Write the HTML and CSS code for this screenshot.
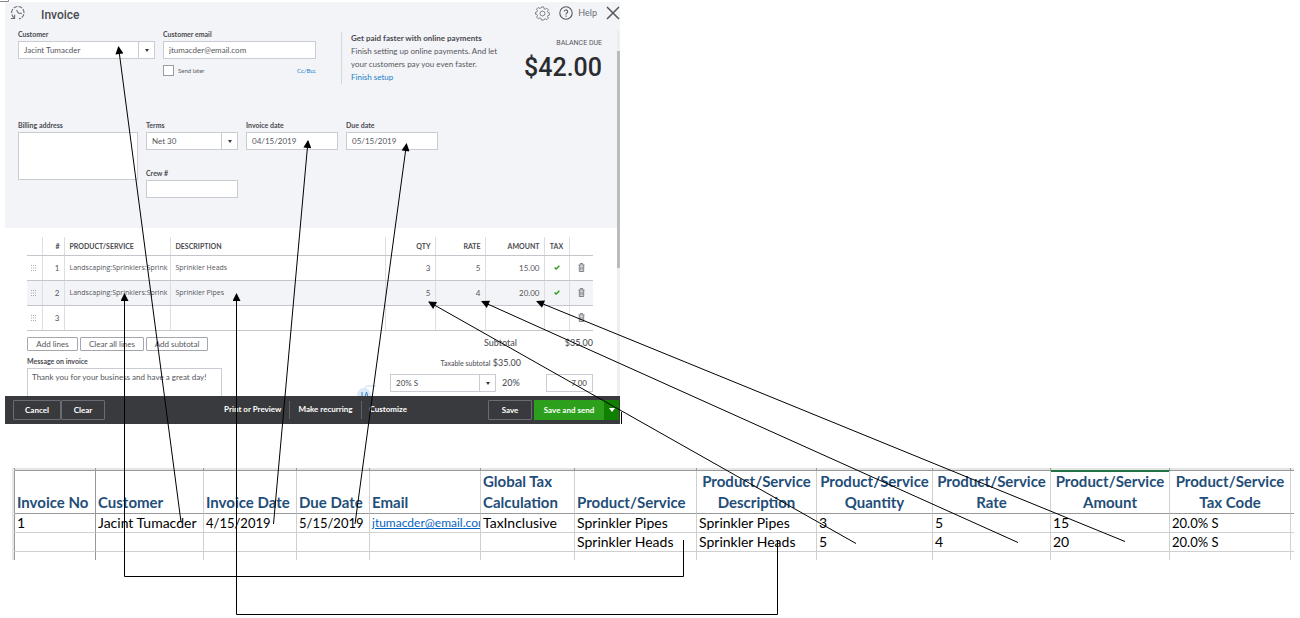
FILE: index.html
```html
<!DOCTYPE html>
<html lang="en">
<head>
<meta charset="utf-8">
<title>Invoice field mapping</title>
<link rel="stylesheet" href="styles.css">
</head>
<body>
<main class="mapping">
  <div class="stage">
    <section class="invoice">
      <header class="topbar">
        <svg class="icon-history" viewBox="0 0 16 16" width="16" height="16" fill="none" stroke="#6b6c72" stroke-width="1.1"><path d="M4 12.600A6.200 6.200 0 1 1 9 13.800" stroke-dasharray="4 1.200"/><path d="M.8 13.500h3.800V9.800M6.500 5l2 3.300H12"/></svg>
        <h1 class="title">Invoice</h1>
        <button class="tool" aria-label="Settings"><svg viewBox="0 0 16 16" width="15" height="15" fill="none" stroke="#6b6c72" stroke-width=".9"><path d="M6.800 1h2.400l.5 1.900 1.200.5 1.700-1 1.700 1.700-1 1.700.5 1.200 1.900.5v2l-1.900.5-.5 1.200 1 1.700-1.700 1.700-1.700-1-1.200.5L9.200 15H6.800l-.5-1.900-1.200-.5-1.700 1-1.700-1.700 1-1.700L2.100 9 .5 8.700v-2l1.600-.5.5-1.200-1-1.700 1.700-1.700 1.700 1 1.300-.5z"/><circle cx="8" cy="8" r="2.600"/></svg></button>
        <button class="tool help"><svg viewBox="0 0 14 14" width="14" height="14" fill="none" stroke="#55565b" stroke-width="1.100"><circle cx="7" cy="7" r="6.200"/><path d="M5.300 5.600a1.700 1.700 0 1 1 2.500 1.500c-.6.3-.8.600-.8 1.300M7 9.500v1.200"/></svg>Help</button>
        <button class="tool" aria-label="Close"><svg viewBox="0 0 14 14" width="14" height="14" stroke="#55565b" stroke-width="1.500"><path d="M1 1l12 12M13 1L1 13"/></svg></button>
      </header>

      <div class="scroll-area">
        <div class="content">
          <div class="details">
            <div class="row contact">
              <div class="field customer">
                <label for="customer">Customer</label>
                <span class="combo"><select id="customer"><option>Jacint Tumacder</option></select></span>
              </div>
              <div class="field email">
                <label for="email">Customer email</label>
                <input id="email" type="text" value="jtumacder@email.com">
                <div class="email-options">
                  <input id="later" type="checkbox"><label for="later">Send later</label>
                  <a href="#">Cc/Bcc</a>
                </div>
              </div>
              <div class="promo">
                <strong>Get paid faster with online payments</strong>
                <p>Finish setting up online payments. And let your customers pay you even faster.</p>
                <a href="#">Finish setup</a>
              </div>
              <div class="balance">
                <span class="balance-label">BALANCE DUE</span>
                <span class="balance-amount">$42.00</span>
              </div>
            </div>
            <div class="row terms-row">
              <div class="field billing">
                <label for="billing">Billing address</label>
                <textarea id="billing"></textarea>
              </div>
              <div class="stack">
                <div class="field">
                  <label for="terms">Terms</label>
                  <span class="combo"><select id="terms"><option>Net 30</option></select></span>
                </div>
                <div class="field">
                  <label for="crew">Crew #</label>
                  <input id="crew" type="text">
                </div>
              </div>
              <div class="field date">
                <label for="invdate">Invoice date</label>
                <input id="invdate" type="text" value="04/15/2019">
              </div>
              <div class="field date">
                <label for="duedate">Due date</label>
                <input id="duedate" type="text" value="05/15/2019">
              </div>
            </div>
          </div>

          <div class="lines">
            <table class="items">
              <colgroup><col class="w-grip"><col class="w-num"><col class="w-product"><col><col class="w-qty"><col class="w-qty"><col class="w-amount"><col class="w-tax"><col class="w-del"></colgroup>
              <thead>
                <tr><th></th><th class="num">#</th><th class="name">PRODUCT/SERVICE</th><th class="name">DESCRIPTION</th><th class="num">QTY</th><th class="num">RATE</th><th class="num">AMOUNT</th><th class="mid">TAX</th><th></th></tr>
              </thead>
              <tbody>
                <tr>
                  <td class="mid"><svg class="grip" viewBox="0 0 6 6"><path d="M0 .5h6M0 3h6M0 5.500h6"/></svg></td><td class="num">1</td><td class="name">Landscaping:Sprinklers:Sprink</td><td class="name">Sprinkler Heads</td><td class="num">3</td><td class="num">5</td><td class="num">15.00</td>
                  <td class="mid"><svg class="tick" viewBox="0 0 6 5"><path d="M.6 2.600l1.500 1.500L5.400.8"/></svg></td>
                  <td class="mid"><svg class="bin" viewBox="0 0 7 9"><path d="M.5 2h6M2.300 1.800V.5h2.400v1.300M1.300 2v6.500h4.400V2M2.800 3.500v4M4.200 3.500v4"/></svg></td>
                </tr>
                <tr class="active">
                  <td class="mid"><svg class="grip" viewBox="0 0 6 6"><path d="M0 .5h6M0 3h6M0 5.500h6"/></svg></td><td class="num">2</td><td class="name">Landscaping:Sprinklers:Sprink</td><td class="name">Sprinkler Pipes</td><td class="num">5</td><td class="num">4</td><td class="num">20.00</td>
                  <td class="mid"><svg class="tick" viewBox="0 0 6 5"><path d="M.6 2.600l1.500 1.500L5.400.8"/></svg></td>
                  <td class="mid"><svg class="bin" viewBox="0 0 7 9"><path d="M.5 2h6M2.300 1.800V.5h2.400v1.300M1.300 2v6.500h4.400V2M2.800 3.500v4M4.200 3.500v4"/></svg></td>
                </tr>
                <tr>
                  <td class="mid"><svg class="grip" viewBox="0 0 6 6"><path d="M0 .5h6M0 3h6M0 5.500h6"/></svg></td><td class="num">3</td><td></td><td></td><td></td><td></td><td></td><td></td>
                  <td class="mid"><svg class="bin" viewBox="0 0 7 9"><path d="M.5 2h6M2.300 1.800V.5h2.400v1.300M1.300 2v6.500h4.400V2M2.800 3.500v4M4.200 3.500v4"/></svg></td>
                </tr>
              </tbody>
            </table>

            <div class="below">
              <div class="below-left">
                <div class="line-actions">
                  <button class="add">Add lines</button><button class="clear-all">Clear all lines</button><button class="subtotal-btn">Add subtotal</button>
                </div>
                <div class="field message">
                  <label for="message">Message on invoice</label>
                  <textarea id="message">Thank you for your business and have a great day!</textarea>
                </div>
              </div>
              <svg class="assist" viewBox="0 0 20 12" width="20" height="12"><circle cx="7" cy="10" r="7" fill="#d9e9f7"/><path d="M8 4c0-3 2-3 5-3h6" fill="none" stroke="#c3d9ee"/><path d="M5 7v5M8 12l1.500-5L11 12" fill="none" stroke="#3f7fc0"/></svg>
              <div class="totals">
                <div class="subtotal"><span>Subtotal</span><span>$35.00</span></div>
                <div class="taxable"><small>Taxable subtotal</small> $35.00</div>
                <div class="tax-row">
                  <span class="combo tax-code"><select aria-label="Tax code"><option>20% S</option></select></span>
                  <span class="rate">20%</span>
                  <input class="tax-amount" type="text" value="7.00" aria-label="Tax amount">
                </div>
              </div>
            </div>
          </div>
        </div>
        <div class="scrollbar"><div class="thumb"></div></div>
      </div>

      <footer class="actions">
        <button class="dark cancel">Cancel</button><button class="dark clear">Clear</button>
        <nav class="links"><a href="#">Print or Preview</a><a href="#">Make recurring</a><a href="#">Customize</a></nav>
        <button class="dark save">Save</button>
        <button class="send">Save and send</button><button class="send-more" aria-label="More save options"><svg viewBox="0 0 6 4" width="6" height="4"><path d="M0 0h6L3 4z" fill="#fff"/></svg></button>
      </footer>
    </section>
  </div>

  <div class="sheet-wrap">
    <table class="sheet">
      <colgroup><col class="c-edge"><col class="c-no"><col class="c-cust"><col class="c-date"><col class="c-due"><col class="c-email"><col class="c-calc"><col class="c-prod"><col class="c-desc"><col class="c-qty"><col class="c-rate"><col class="c-amt"><col class="c-code"><col class="c-end"></colgroup>
      <thead>
        <tr class="ruler"><td></td><td></td><td></td><td></td><td></td><td></td><td></td><td></td><td></td><td></td><td></td><td></td><td></td><td></td></tr>
        <tr><th></th><th>Invoice No</th><th>Customer</th><th>Invoice Date</th><th>Due Date</th><th>Email</th><th>Global Tax Calculation</th><th>Product/Service</th><th class="center">Product/Service Description</th><th class="center">Product/Service Quantity</th><th class="center">Product/Service Rate</th><th class="center selected">Product/Service Amount</th><th class="center">Product/Service Tax Code</th><th></th></tr>
      </thead>
      <tbody>
        <tr><td></td><td>1</td><td>Jacint Tumacder</td><td class="day">4/15/2019</td><td class="day">5/15/2019</td><td class="mail"><a href="#">jtumacder@email.com</a></td><td>TaxInclusive</td><td>Sprinkler Pipes</td><td>Sprinkler Pipes</td><td>3</td><td>5</td><td>15</td><td class="day">20.0% S</td><td></td></tr>
        <tr><td></td><td></td><td></td><td></td><td></td><td></td><td></td><td>Sprinkler Heads</td><td>Sprinkler Heads</td><td>5</td><td>4</td><td>20</td><td class="day">20.0% S</td><td></td></tr>
        <tr class="stub"><td></td><td></td><td></td><td></td><td></td><td></td><td></td><td></td><td></td><td></td><td></td><td></td><td></td><td></td></tr>
      </tbody>
    </table>
  </div>

  <svg class="arrows" viewBox="0 0 1300 618" preserveAspectRatio="none" fill="none" stroke="#000">
    <defs><marker id="head" viewBox="0 0 9 8" refX="1" refY="4" markerWidth="9" markerHeight="8" markerUnits="userSpaceOnUse" orient="auto"><path d="M0 4L8 0v8z" fill="#000" stroke="none"/></marker></defs>
    <path d="M0 1.500h8.500V0" stroke="#888"/>
    <path d="M621.500 412v12"/>
    <g marker-start="url(#head)">
      <path d="M118.500 47L181 522"/>
      <path d="M308 141L273.500 524"/>
      <path d="M406.500 144L355 524"/>
      <path d="M124.500 294V576.500H683.500V540"/>
      <path d="M236.500 294V614.500H777.500V540"/>
      <path d="M429 302L856 543.500"/>
      <path d="M482 301.500L1018 542.500"/>
      <path d="M537 301.500L1125 541.500"/>
    </g>
  </svg>
</main>
</body>
</html>
```
FILE: styles.css
```css
* { box-sizing: border-box; }
body { margin: 0; background: #fff; font-family: Lato, "Liberation Sans", sans-serif; }
button, input, select, textarea { font: inherit; color: inherit; margin: 0; border-radius: 0; }
button { cursor: pointer; white-space: nowrap; }
p, h1 { margin: 0; }
a { color: #1381c9; text-decoration: none; }

.mapping { position: relative; min-height: 618px; }
.stage { display: grid; grid-template-columns: 615fr 680fr; padding: 2px 0 0 5px; }
.arrows { position: absolute; top: 0; left: 0; width: 100%; height: 618px; pointer-events: none; }

/* Invoice window */
.invoice { min-width: 0; font-size: 8px; line-height: 10px; color: #55565b; }
.topbar { display: flex; align-items: center; gap: 9px; height: 28px; padding: 0 0 6px 5px; background: #f3f4f8; }
.title { flex: 1; padding: 3px 0 0 6px; font: 500 12px/16px Roboto, sans-serif; color: #4a4b50; }
.tool { display: flex; align-items: center; gap: 5px; padding: 0; border: 0; background: none; color: #6b6c72; font-size: 9px; }
.scroll-area { display: flex; height: 366px; overflow: hidden; }
.content { flex: 1; min-width: 0; }
.scrollbar { width: 3px; padding-top: 21px; background: #eee; }
.thumb { height: 217px; background: #bbb; }

.details { height: 198px; padding: 0 15px 0 13px; background: #f3f4f8; }
.row { display: flex; align-items: flex-start; }
.contact { height: 91px; gap: 8px; }
.terms-row { gap: 8px; }
.field { display: flex; flex-direction: column; }
.field > label { height: 11px; line-height: 8px; font-size: 7px; font-weight: 700; color: #4a4b50; white-space: nowrap; }
input[type="text"], select, textarea { width: 100%; height: 18px; padding: 0 5px; border: 1px solid #c9ccd2; background: #fff; outline: 0; font-size: 8px; color: #55565b; }
textarea { display: block; resize: none; overflow: hidden; }
.combo { position: relative; display: block; }
.combo select { appearance: none; }
.combo::before { content: ""; position: absolute; top: 1px; bottom: 1px; right: 16px; width: 1px; background: #c9ccd2; }
.combo::after { content: ""; position: absolute; top: 8px; right: 6px; border: 2px solid transparent; border-top: 3px solid #393a3d; border-bottom: 0; }
.customer { width: 137px; }
.email { width: 153px; }
.email-options { display: flex; align-items: center; gap: 4px; margin-top: 6px; font-size: 6px; }
.email-options input { appearance: none; width: 11px; height: 11px; border: 1px solid #9a9ca3; background: #fff; }
.email-options a { margin-left: auto; }
.promo { width: 170px; margin: 2px 0 0 17px; padding-left: 9px; border-left: 1px solid #d4d7dc; line-height: 13px; }
.promo strong { color: #4a4b50; white-space: nowrap; }
.balance { display: flex; flex-direction: column; align-items: flex-end; flex: 1; padding-top: 8px; font-family: Roboto, sans-serif; }
.balance-label { font-size: 7px; white-space: nowrap; }
.balance-amount { font-size: 25px; font-weight: 500; line-height: 40px; color: #2b2c2f; }
.billing { width: 120px; }
.billing textarea { height: 48px; }
.stack { display: flex; flex-direction: column; gap: 19px; width: 92px; }
.date { width: 92px; }

.lines { padding: 9px 24px 0 22px; }
.items { width: 100%; table-layout: fixed; border-collapse: collapse; }
.items th, .items td { height: 25px; padding: 0 4px; border-left: 1px solid #dcdee3; border-bottom: 1px solid #c4c6cb; text-align: left; white-space: nowrap; overflow: hidden; }
.items th { height: 18px; font-size: 7px; color: #4a4b50; }
.items th:first-child, .items td:first-child { border-left: 0; }
.items .name { padding: 0 0 0 5px; }
.items td.name { font-family: "Open Sans", sans-serif; font-size: 7px; }
.items .num { text-align: right; }
.items .mid { text-align: center; }
.items .active { background: #f3f4f8; }
.w-grip { width: 15px; }
.w-num { width: 22px; }
.w-product { width: 106px; }
.w-qty { width: 50px; }
.w-amount { width: 59px; }
.w-tax { width: 25px; }
.w-del { width: 24px; }
.items svg { display: block; margin: 0 auto; fill: none; }
.grip { width: 6px; height: 6px; stroke: #aaacb2; stroke-width: 1; stroke-dasharray: 1 1; }
.tick { width: 6px; height: 5px; stroke: #2ca01c; stroke-width: 1.4; }
.bin { width: 7px; height: 9px; stroke: #7d8086; stroke-width: 1; }

.below { display: flex; align-items: flex-start; padding-top: 6px; }
.below-left { flex: 1; }
.line-actions { display: flex; gap: 2px; }
.line-actions button { height: 14px; padding: 0; border: 1px solid #a5a7ad; border-radius: 1px; background: #fff; font-size: 8px; line-height: 10px; }
.line-actions .add { width: 51px; }
.line-actions .clear-all { width: 64px; }
.line-actions .subtotal-btn { width: 62px; }
.message { width: 195px; margin-top: 6px; }
.message textarea { height: 48px; padding: 3px 4px; }
.assist { align-self: flex-start; margin: 48px 13px 0 0; }
.totals { width: 203px; font-size: 9px; line-height: 12px; font-weight: 500; }
.subtotal { display: flex; justify-content: space-between; padding-left: 94px; }
.taxable { margin-top: 8px; padding-right: 72px; text-align: right; }
.taxable small { font-size: 7px; }
.tax-row { display: flex; align-items: center; gap: 6px; margin-top: 5px; }
.tax-code { width: 106px; }
.rate { flex: 1; }
.tax-row .tax-amount { width: 47px; text-align: right; }

.actions { display: flex; align-items: center; height: 28px; padding: 0 1px 0 8px; background: #393a3d; color: #fff; font-size: 8px; }
.actions button { height: 20px; padding: 0; border: 0; font-weight: 700; }
.actions .dark { border: 1px solid #6b6c72; border-radius: 1px; background: none; }
.cancel { width: 48px; }
.clear { width: 44px; }
.save { width: 44px; margin-right: 2px; }
.send { width: 70px; background: #2ca01c; }
.actions .send-more { display: flex; align-items: center; justify-content: center; width: 15px; background: #108000; }
.links { display: flex; flex: 1; justify-content: center; padding-left: 38px; }
.links a { padding: 2px 8px 4px; color: #fff; font-weight: 700; line-height: 12px; white-space: nowrap; }
.links a + a { border-left: 1px solid #606167; }

/* Spreadsheet */
.sheet-wrap { padding: 44px 6px 0 12px; }
.sheet { width: 100%; table-layout: fixed; border-collapse: separate; border-spacing: 0; font-size: 14px; line-height: 18px; color: #000; }
.sheet th, .sheet td { height: 19px; padding: 0 0 0 2px; border-right: 1px solid #d0d0d0; border-bottom: 1px solid #d0d0d0; text-align: left; white-space: nowrap; overflow: hidden; }
.sheet th { height: 43px; border-bottom-color: #999; vertical-align: bottom; white-space: normal; font-size: 15px; line-height: 21px; color: #1f4e79; }
.sheet .center { padding: 0; text-align: center; }
.sheet .ruler td { height: 3px; padding: 0; background: #e6e6e6; border-color: #999; }
.sheet tr > :nth-child(-n+2) { border-right-color: #999; }
.sheet tr > :first-child { background: #e6e6e6; border-bottom-color: #e6e6e6; padding: 0; }
.sheet tr > :last-child { border-right: 0; padding: 0; }
.sheet .stub td { height: 8px; border-bottom: 0; }
.sheet .selected { box-shadow: inset 0 1px #217346; }
.sheet .ruler td:nth-child(12) { border-bottom-color: #217346; }
.sheet .day { font-size: 13px; }
.sheet .mail { font-size: 12px; }
.sheet .mail a { color: #0563c1; text-decoration: underline; }
.c-edge { width: 3px; }
.c-no { width: 81px; }
.c-cust { width: 108px; }
.c-date { width: 93px; }
.c-due { width: 73px; }
.c-email { width: 111px; }
.c-calc { width: 94px; }
.c-prod { width: 122px; }
.c-desc { width: 120px; }
.c-qty { width: 116px; }
.c-rate { width: 118px; }
.c-amt { width: 119px; }
.c-code { width: 121px; }
.c-end { width: 3px; }
```
